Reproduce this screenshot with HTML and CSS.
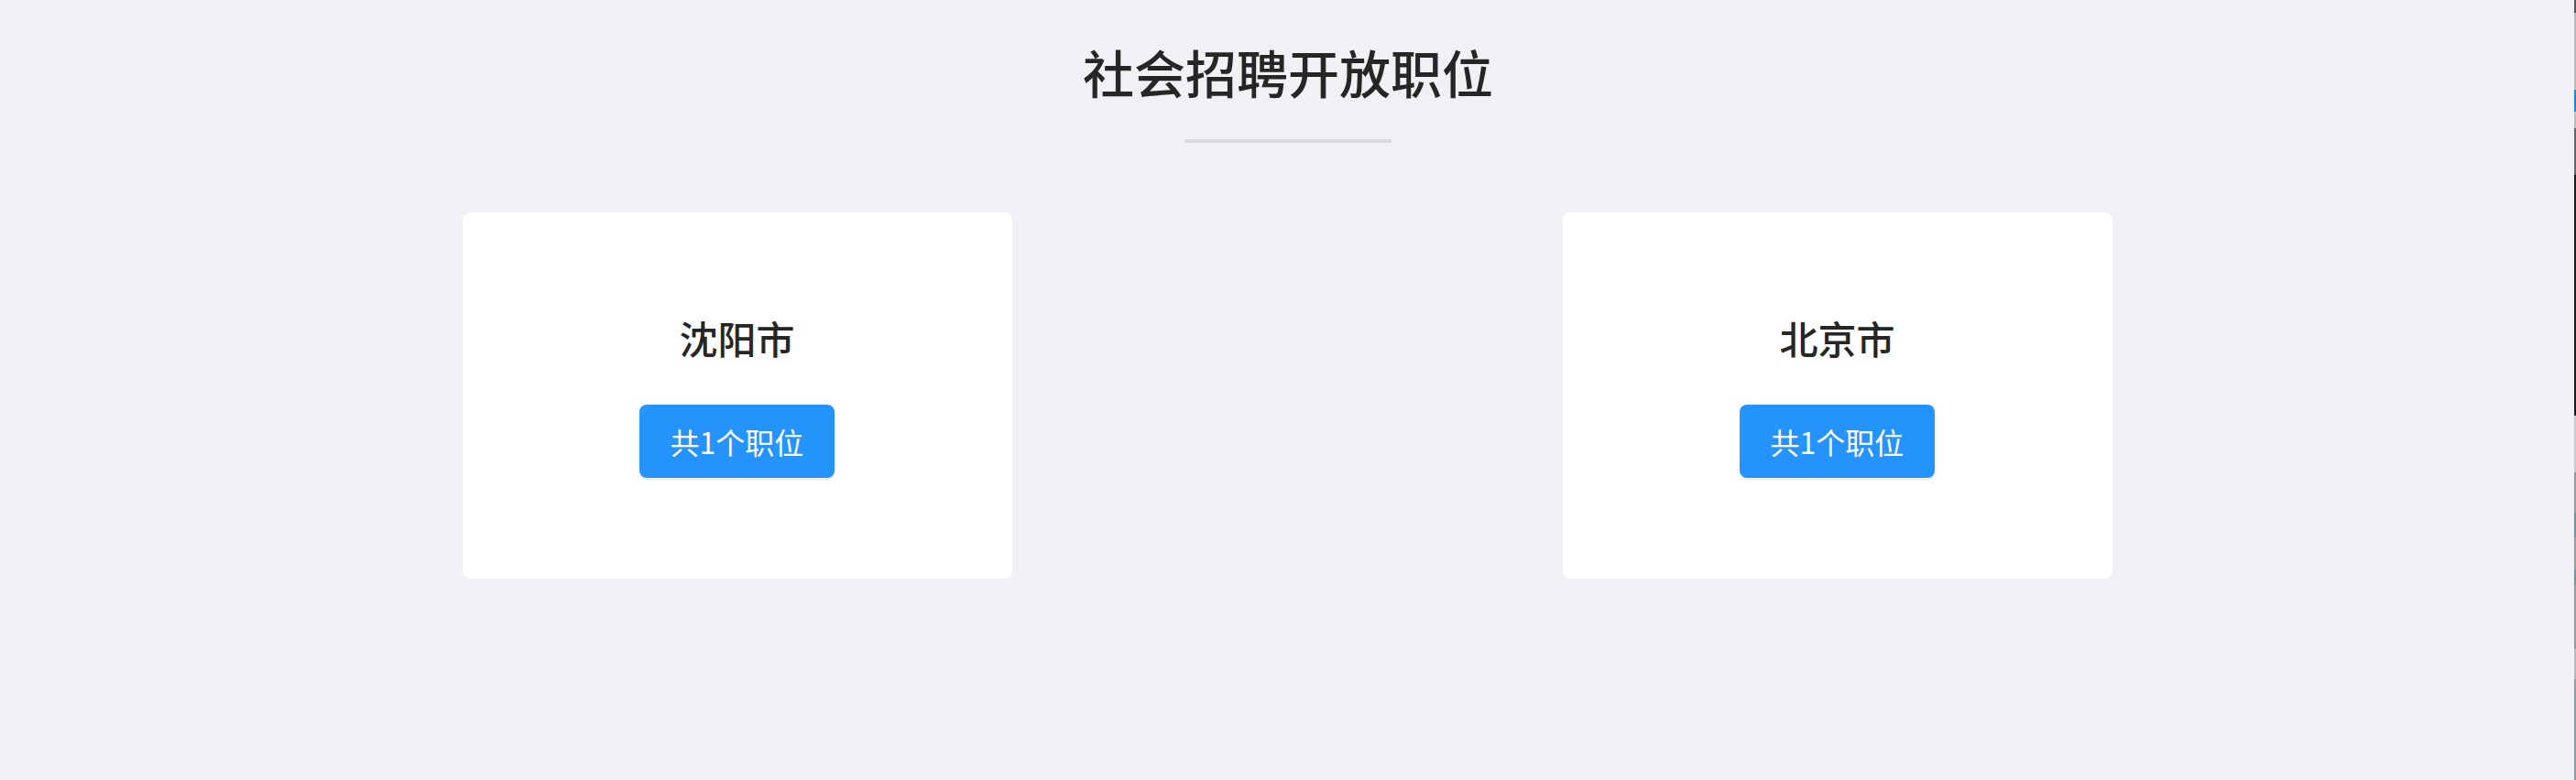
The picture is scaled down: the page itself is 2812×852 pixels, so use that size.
FILE: index.html
```html
<!DOCTYPE html>
<html lang="zh-CN">
<head>
<meta charset="utf-8">
<title>社会招聘开放职位</title>
<link rel="stylesheet" href="styles.css">
</head>
<body>
<main class="page">
  <h1 class="title">社会招聘开放职位</h1>
  <div class="divider"></div>
  <section class="cities">
    <div class="card">
      <div class="city">沈阳市</div>
      <a class="count-btn">共1个职位</a>
    </div>
    <div class="card">
      <div class="city">北京市</div>
      <a class="count-btn">共1个职位</a>
    </div>
  </section>
</main>
<div class="edge-strip"></div>
</body>
</html>
```
FILE: styles.css
```css
html, body {
  margin: 0;
  padding: 0;
  height: 100%;
}
body {
  background: #f0f1f5;
  font-family: "Noto Sans CJK SC", "Noto Sans", sans-serif;
  color: #262626;
  overflow: hidden;
}
.page {
  display: flex;
  flex-direction: column;
  align-items: center;
  padding-top: 50px;
}
.title {
  margin: 0;
  font-size: 56px;
  line-height: 56px;
  font-weight: 500;
  color: #262626;
  letter-spacing: 0;
}
.divider {
  margin-top: 46px;
  width: 226px;
  height: 4px;
  background: #d9dadf;
}
.cities {
  margin-top: 76px;
  width: 1801px;
  display: flex;
  justify-content: space-between;
  transform: translateX(-1px);
}
.card {
  width: 600px;
  height: 400px;
  box-sizing: border-box;
  background: #ffffff;
  border-radius: 8px;
  display: flex;
  flex-direction: column;
  align-items: center;
  padding-top: 116px;
}
.city {
  font-size: 42px;
  line-height: 42px;
  font-weight: 500;
  color: #262626;
}
.count-btn {
  margin-top: 52px;
  height: 80px;
  line-height: 80px;
  padding: 0 34px;
  background: #2593fc;
  color: #ffffff;
  font-size: 32px;
  border-radius: 8px;
  box-shadow: 0 3px 0 #f1f1f3;
  cursor: pointer;
}
.edge-strip {
  position: fixed;
  top: 0;
  right: 0;
  width: 2px;
  height: 852px;
  background: linear-gradient(to bottom,
    #555 0, #555 14px,
    #bbb 14px, #bbb 98px,
    #2a7fd4 98px, #2a7fd4 122px,
    #bbb 122px, #bbb 140px,
    #666 140px, #666 191px,
    #1a1a1a 191px, #1a1a1a 454px,
    #ccc 454px, #ccc 516px,
    #999 516px, #999 560px,
    #7a8e9c 560px, #7a8e9c 587px,
    #999 587px, #999 622px,
    #7a8e9c 622px, #7a8e9c 638px,
    #999 638px, #999 709px,
    #bbb 709px, #bbb 742px,
    #999 742px, #999 755px,
    #8a9aa8 755px, #8a9aa8 852px);
}
```
